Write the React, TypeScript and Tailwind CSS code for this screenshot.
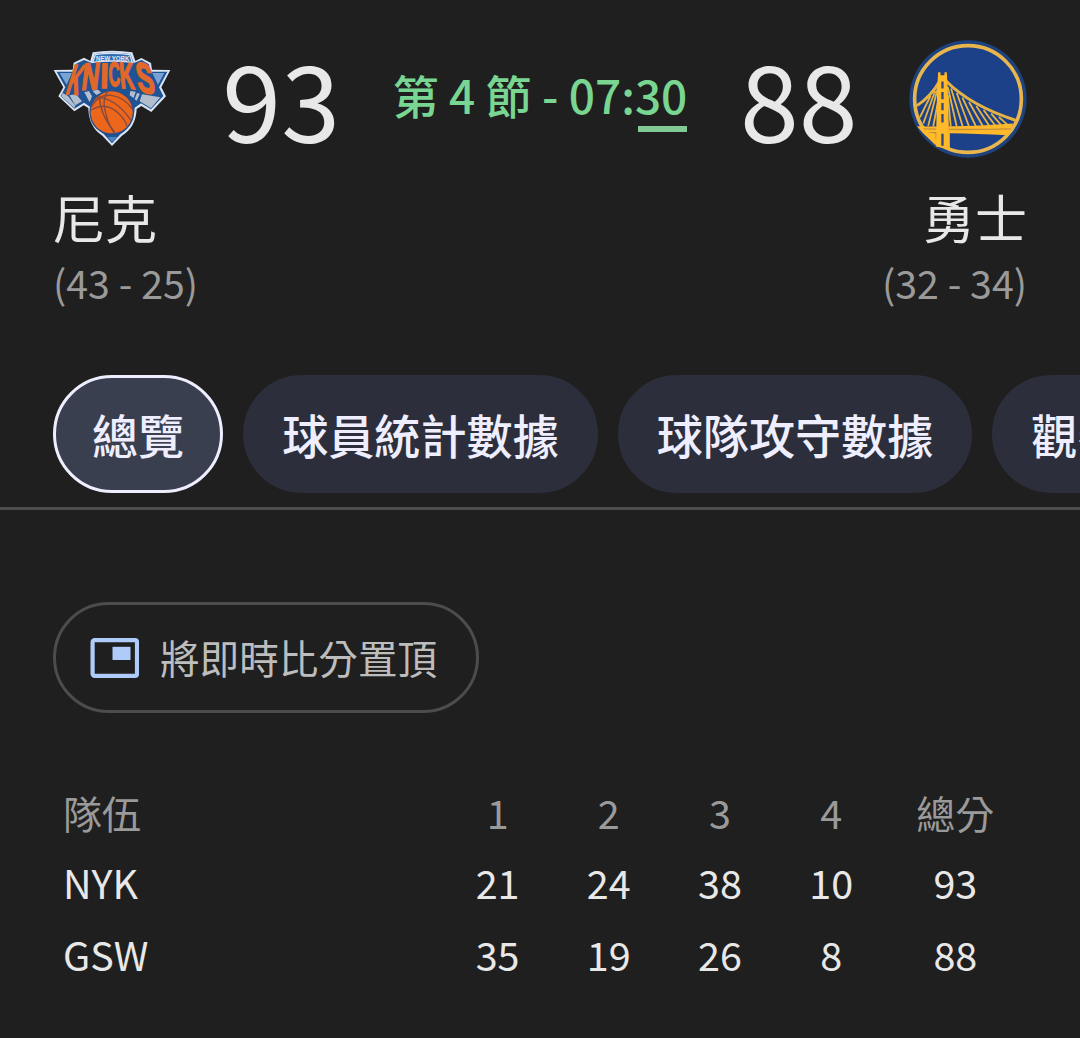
import { clsx } from 'clsx';

const tabs = ['總覽', '球員統計數據', '球隊攻守數據', '觀賽'];

const scoreRows = [
  { team: 'NYK', quarters: [21, 24, 38, 10], total: 93 },
  { team: 'GSW', quarters: [35, 19, 26, 8], total: 88 },
];

// each letter of the wordmark sits on an arc, so it gets its own matrix
const knicksLetters = [
  { char: 'K', transform: 'matrix(0.64 0.02 -0.46 1.48 74 177)' },
  { char: 'N', transform: 'matrix(0.84 -0.06 -0.16 1.34 122 165)' },
  { char: 'I', transform: 'matrix(1 0 -0.03 1.24 181 158)' },
  { char: 'C', transform: 'matrix(0.56 0 0.04 1.2 207 154)' },
  { char: 'K', transform: 'matrix(0.7 0.06 0.12 1.3 242 158)' },
  { char: 'S', transform: 'matrix(0.92 0.2 0.24 1.5 296 168)' },
];

const KnicksLogo = () => (
  <svg viewBox="39 39 360 300" className="h-[100px] w-[120px]">
    <path d="M41 105 L98 104 L101 83 L132 68 L151 78 L158 52 Q215 42 277 52 L286 78 L304 69 L333 84 L336 104 L391 105 L364 157 L378 184 L334 231 L304 213 L290 222 Q288 276 246 302 L216 333 L187 302 Q146 276 145 219 L131 211 L103 229 L55 184 L70 157 Z" fill="#d9e4f4" />
    <path d="M50 110 L101 110 L107 87 L132 75 L156 84 L164 57 Q215 49 271 57 L281 84 L305 75 L327 88 L331 110 L382 110 L357 157 L370 183 L333 223 L303 205 L284 218 Q282 272 242 297 L216 325 L191 297 Q153 272 151 216 L132 203 L103 221 L62 183 L76 157 Z" fill="#205394" />
    <path d="M59 114 L96 114 L80 149 Z M373 114 L337 114 L354 149 Z" fill="#7ba2d4" />
    <path d="M68 174 L84 183 L106 212 L103 219 L64 184 Z M88 181 L108 178 L126 199 L106 211 Z M133 172 L147 168 L156 184 L149 202 Z M157 167 L174 164 L184 173 L169 180 Z" fill="#b2bdce" />
    <path d="M306 178 L361 187 L333 220 L299 199 Z M271 168 L287 170 L281 189 L269 181 Z M291 174 L300 176 L290 197 L284 193 Z" fill="#b2bdce" />
    <path d="M158 82 L166 59 Q215 51 269 59 L277 82 Q215 74 158 82 Z" fill="#316bad" stroke="#d9e4f4" strokeWidth="4" />
    <text x="168" y="78" textLength="100" lengthAdjust="spacingAndGlyphs" className="font-['Liberation_Sans'] text-[21px] font-bold" fill="#e2ebf6">NEW YORK</text>
    {knicksLetters.map((letter, i) => (
      <text
        key={i}
        transform={letter.transform}
        className="font-['Liberation_Sans'] text-[85px] font-bold"
        fill="#e2682a"
        stroke="#e2682a"
        strokeWidth="4"
      >
        {letter.char}
      </text>
    ))}
    <circle cx="215" cy="232" r="67" fill="#2b4e87" />
    <circle cx="215" cy="232" r="63" fill="#ec661c" />
    <g fill="none" stroke="#874a3e" strokeWidth="4">
      <path d="M154 216 Q174 178 213 181 Q251 185 277 222" />
      <path d="M169 188 Q223 185 273 256" />
      <path d="M178 180 Q178 237 225 293" />
      <path d="M154 225 Q198 198 237 236 Q257 256 261 274" />
      <path d="M202 171 Q188 191 194 221 Q202 264 222 294" />
    </g>
    <path d="M203 306 L231 306 L216 321 Z" fill="#4f83bf" />
  </svg>
);

const WarriorsLogo = () => (
  <svg viewBox="27 28 354 356" className="mt-px h-[118px] w-[118px]">
    <circle cx="204" cy="206" r="177" fill="#1d427e" />
    <circle cx="204" cy="206" r="161" fill="#1c4189" stroke="#e8b64d" strokeWidth="11" />
    <g fill="none" stroke="#e5b345" strokeWidth="5.5">
      <path d="M118 153 Q92 198 50 226" strokeWidth="9" />
      <path d="M137 151 Q211 226 347 270" strokeWidth="9" />
      <path d="M115 164 L84 287 M105 181 L69 280 M91 197 L59 261 M119 185 L99 289" />
      <path d="M143 170 L170 289 M153 174 L188 289 M170 188 L207 289 M187 202 L228 289 M207 215 L249 288 M229 227 L268 287 M251 239 L286 286 M274 250 L304 285 M297 260 L322 283" />
      <path d="M143 194 L152 289" />
    </g>
    <path d="M50 288 Q190 291 340 280 L324 315 Q230 310 149 309 L149 358 L139 357 L139 309 L76 306 L107 309 L107 346 L67 308 Z" fill="#ffb929" />
    <path d="M70 296 Q190 300 333 296" fill="none" stroke="#c6913d" strokeWidth="4" />
    <path d="M114 125 L121 125 L121 134 L133 134 L133 125 L140 125 L143 175 L148 358 L107 349 L111 175 Z" fill="#ffb929" />
    <path d="M127 153 V174 M127 185 V207 M127 218 V240 M127 251 V277 M127 311 V347" stroke="#31497d" strokeWidth="7" />
  </svg>
);

const PinScoreIcon = () => (
  <svg viewBox="0 0 49 40" className="h-10 w-[49px]" fill="none">
    <rect x="2.6" y="2.2" width="44.4" height="35.6" rx="2" stroke="#aecbfa" strokeWidth="4.2" />
    <rect x="22.5" y="8.8" width="18" height="13.2" fill="#aecbfa" />
  </svg>
);

const ScoreHeader = () => (
  <header className="h-[375px] px-[53px] pt-[39px] text-[#e8e8e8]">
    <div className="flex h-[118px] items-center justify-between">
      <div className="flex w-[287px] items-center justify-between">
        <KnicksLogo />
        <span className="pb-[3px] text-[106px] leading-[118px]">93</span>
      </div>
      <div className="mb-[9px] text-[46px] leading-[60px] font-medium whitespace-nowrap text-[#78d692]">
        第 4 節 - 07:
        <span className="relative inline-block">
          30
          <span className="absolute top-[62px] right-0 left-[3px] h-[6px] bg-[#81c995]" />
        </span>
      </div>
      <div className="flex w-[287px] items-center justify-between">
        <span className="pb-[3px] text-[106px] leading-[118px]">88</span>
        <WarriorsLogo />
      </div>
    </div>
    <div className="mt-[24px] flex justify-between">
      <div>
        <div className="text-[52px] leading-[72px]">尼克</div>
        <div className="text-[39.3px] leading-[57px] text-[#9a9a9a]">(43 - 25)</div>
      </div>
      <div className="text-right">
        <div className="text-[52px] leading-[72px]">勇士</div>
        <div className="text-[39.3px] leading-[57px] text-[#9a9a9a]">(32 - 34)</div>
      </div>
    </div>
  </header>
);

const TabBar = () => (
  <nav className="flex h-[135px] gap-5 overflow-hidden border-b-[3px] border-[#4c4c4c] pl-[53px]">
    {tabs.map((tab, i) => (
      <button
        key={tab}
        className={clsx(
          'h-[118px] shrink-0 rounded-full border-[3px] px-[36px] pb-px text-[46.1px] leading-[60px] font-medium whitespace-nowrap text-[#eeeeff]',
          i === 0 ? 'border-[#eeeeff] bg-[#3a3f4f]' : 'border-[#2c2f3b] bg-[#2c2f3b]'
        )}
      >
        {tab}
      </button>
    ))}
  </nav>
);

const ScoreTable = () => (
  <section className="mx-[57px] mt-[65px] text-[39.5px] text-[#e8e8e8]">
    <div className="grid h-[68px] grid-cols-[385px_repeat(4,111.2px)_137.2px] items-center text-center text-[#9a9a9a]">
      <span className="pl-1.5 text-left text-[39px]">隊伍</span>
      {[1, 2, 3, 4].map((q) => (
        <span key={q}>{q}</span>
      ))}
      <span className="text-[39px]">總分</span>
    </div>
    {scoreRows.map((row) => (
      <div key={row.team} className="grid h-[72px] grid-cols-[385px_repeat(4,111.2px)_137.2px] items-center text-center">
        <span className="pl-1.5 text-left">{row.team}</span>
        {row.quarters.map((points, i) => (
          <span key={i}>{points}</span>
        ))}
        <span>{row.total}</span>
      </div>
    ))}
  </section>
);

const App = () => {
  return (
    <div className="h-[1038px] w-[1080px] overflow-hidden bg-[#1f1f1f] font-['Noto_Sans_CJK_TC',sans-serif]">
      <ScoreHeader />
      <TabBar />
      <button className="mt-[92px] ml-[53px] flex h-[111px] w-[426px] items-center rounded-full border-[3px] border-[#4c4c4c] pl-[34px] text-[#bdbdbd]">
        <PinScoreIcon />
        <span className="mb-[2px] ml-[21px] text-[39.6px] leading-[60px] whitespace-nowrap">將即時比分置頂</span>
      </button>
      <ScoreTable />
    </div>
  );
};

export default App;
